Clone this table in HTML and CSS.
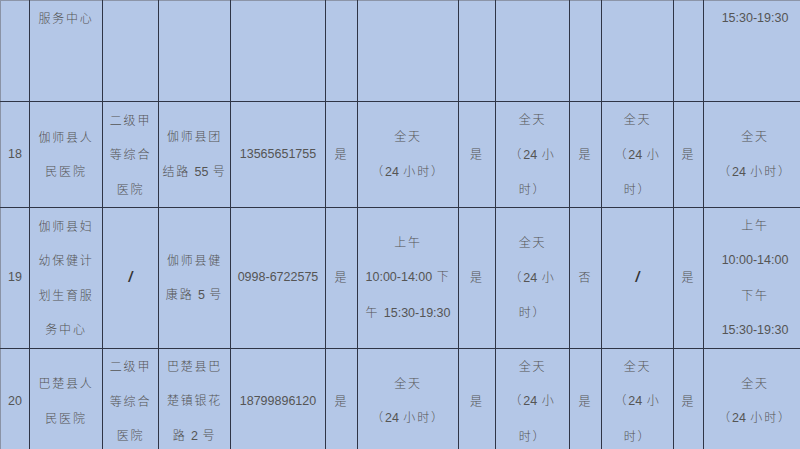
FILE: index.html
```html
<!DOCTYPE html>
<html lang="zh-CN">
<head>
<meta charset="utf-8">
<title>医院服务表</title>
<link rel="stylesheet" href="styles.css">
</head>
<body>
<table class="grid">
  <colgroup>
    <col class="c0"><col class="c1"><col class="c2"><col class="c3"><col class="c4"><col class="c5"><col class="c6">
    <col class="c7"><col class="c8"><col class="c9"><col class="c10"><col class="c11"><col class="c12">
  </colgroup>
  <tr class="r0">
    <td></td>
    <td class="cn">服务中心</td>
    <td></td><td></td><td></td><td></td><td></td><td></td><td></td><td></td><td></td><td></td>
    <td class="num">15:30-19:30</td>
  </tr>
  <tr class="r18">
    <td class="num">18</td>
    <td class="cn">伽师县人<br>民医院</td>
    <td class="cn">二级甲<br>等综合<br>医院</td>
    <td class="cn">伽师县团<br>结路 <span class="num">55</span> 号</td>
    <td class="num">13565651755</td>
    <td class="cn">是</td>
    <td class="cn">全天<br>（<span class="num">24</span> 小时）</td>
    <td class="cn">是</td>
    <td class="cn">全天<br>（<span class="num">24</span> 小<br>时）</td>
    <td class="cn">是</td>
    <td class="cn">全天<br>（<span class="num">24</span> 小<br>时）</td>
    <td class="cn">是</td>
    <td class="cn">全天<br>（<span class="num">24</span> 小时）</td>
  </tr>
  <tr class="r19">
    <td class="num">19</td>
    <td class="cn">伽师县妇<br>幼保健计<br>划生育服<br>务中心</td>
    <td class="slash">/</td>
    <td class="cn">伽师县健<br>康路 <span class="num">5</span> 号</td>
    <td class="num">0998-6722575</td>
    <td class="cn">是</td>
    <td class="cn">上午<br><span class="num">10:00-14:00</span> 下<br>午 <span class="num">15:30-19:30</span></td>
    <td class="cn">是</td>
    <td class="cn">全天<br>（<span class="num">24</span> 小<br>时）</td>
    <td class="cn">否</td>
    <td class="slash">/</td>
    <td class="cn">是</td>
    <td class="cn">上午<br><span class="num">10:00-14:00</span><br>下午<br><span class="num">15:30-19:30</span></td>
  </tr>
  <tr class="r20">
    <td class="num">20</td>
    <td class="cn">巴楚县人<br>民医院</td>
    <td class="cn">二级甲<br>等综合<br>医院</td>
    <td class="cn">巴楚县巴<br>楚镇银花<br>路 <span class="num">2</span> 号</td>
    <td class="num">18799896120</td>
    <td class="cn">是</td>
    <td class="cn">全天<br>（<span class="num">24</span> 小时）</td>
    <td class="cn">是</td>
    <td class="cn">全天<br>（<span class="num">24</span> 小<br>时）</td>
    <td class="cn">是</td>
    <td class="cn">全天<br>（<span class="num">24</span> 小<br>时）</td>
    <td class="cn">是</td>
    <td class="cn">全天<br>（<span class="num">24</span> 小时）</td>
  </tr>
</table>
</body>
</html>
```

FILE: styles.css
```css
html, body {
  margin: 0;
  padding: 0;
  background: #b4c7e7;
  overflow: hidden;
}

body {
  width: 800px;
  height: 449px;
}

.grid {
  border-collapse: collapse;
  table-layout: fixed;
  width: 806px;
  background: #b4c7e7;
  color: #555555;
  font-family: "Noto Sans CJK SC", sans-serif;
  font-size: 12px;
  line-height: 34.5px;
}

.grid td {
  border: 1px solid #2f3546;
  padding: 0;
  text-align: center;
  vertical-align: middle;
  white-space: nowrap;
  overflow: hidden;
}

.grid tr:first-child td {
  border-top-color: #8c95a8;
}

.grid td:first-child {
  border-left-color: #8a93a6;
}

.c0 { width: 29px; }
.c1 { width: 73px; }
.c2 { width: 56px; }
.c3 { width: 72px; }
.c4 { width: 95px; }
.c5 { width: 32px; }
.c6 { width: 101px; }
.c7 { width: 37px; }
.c8 { width: 74px; }
.c9 { width: 32px; }
.c10 { width: 72px; }
.c11 { width: 30px; }
.c12 { width: 103px; }

.r0 { height: 101px; }
.r0 td { vertical-align: top; }
.r0 td.cn, .r0 td.num { line-height: 34px; }
.r18 { height: 105px; }
.r19 { height: 139px; }
.r20 { height: 104px; }

.cn {
  letter-spacing: 1.8px;
  font-weight: 300;
}

.num {
  font-family: "Liberation Sans", sans-serif;
  font-size: 12.5px;
  letter-spacing: 0;
  font-weight: 400;
}

.slash {
  font-family: "Liberation Sans", sans-serif;
  font-size: 14px;
  font-weight: 700;
  font-style: italic;
  color: #333;
}
```
